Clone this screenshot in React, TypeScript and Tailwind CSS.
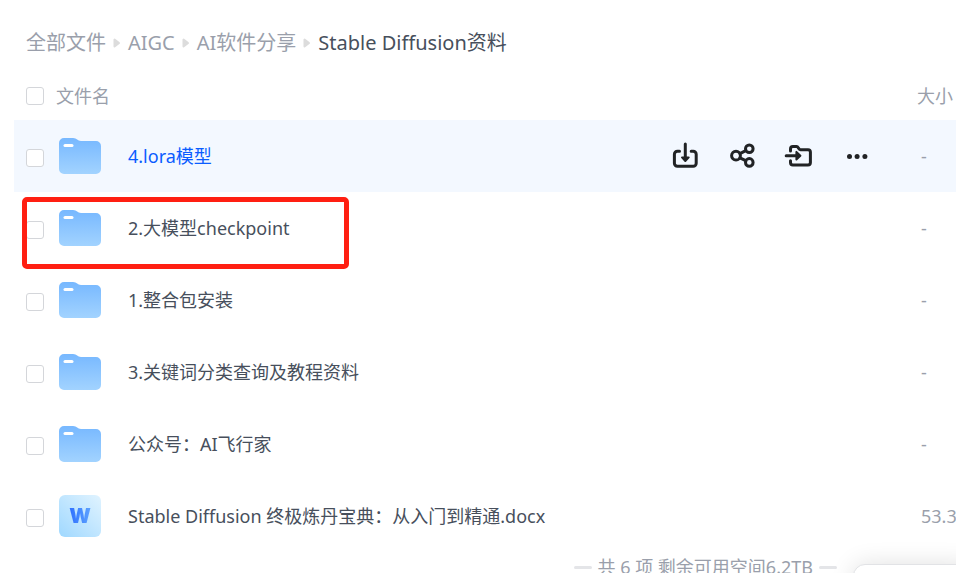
import React from "react";

const files = [
  { name: "4.lora模型", size: "-", type: "folder", active: true },
  { name: "2.大模型checkpoint", size: "-", type: "folder", marked: true },
  { name: "1.整合包安装", size: "-", type: "folder" },
  { name: "3.关键词分类查询及教程资料", size: "-", type: "folder" },
  { name: "公众号：AI飞行家", size: "-", type: "folder" },
  { name: "Stable Diffusion 终极炼丹宝典：从入门到精通.docx", size: "53.3M", type: "doc" },
];

const crumbs = ["全部文件", "AIGC", "AI软件分享"];

function Checkbox({ label }: { label: string }) {
  return (
    <input
      type="checkbox"
      aria-label={label}
      className="size-[18px] shrink-0 appearance-none rounded-[3px] border border-[#d4d6da] bg-white"
    />
  );
}

function FolderIcon() {
  return (
    <svg width="42" height="36" viewBox="0 0 42 36" className="shrink-0">
      <defs>
        <linearGradient id="folder" x1="0" y1="0" x2="0" y2="1">
          <stop offset="0" stopColor="#77b8ff" />
          <stop offset="1" stopColor="#a2d3ff" />
        </linearGradient>
      </defs>
      <path
        d="M5 0H14C18 0 18.5 3 22 3H37A5 5 0 0 1 42 8V31A5 5 0 0 1 37 36H5A5 5 0 0 1 0 31V5A5 5 0 0 1 5 0Z"
        fill="url(#folder)"
      />
      <rect x="4.5" y="6" width="10" height="3" rx="1.5" fill="#fff" />
    </svg>
  );
}

function DocIcon() {
  return (
    <span className="flex size-[42px] shrink-0 items-center justify-center rounded-md bg-linear-to-tr from-[#9fd8ff] to-[#e0f3ff]">
      <span className="bg-linear-to-r from-[#2f6fff] to-[#5ea2ff] bg-clip-text font-[Inter] text-xl leading-6 font-black text-transparent">
        W
      </span>
    </span>
  );
}

const iconProps = {
  width: 28,
  height: 28,
  viewBox: "0 0 28 28",
  fill: "none",
  stroke: "currentColor",
  strokeWidth: 3,
  strokeLinecap: "round" as const,
  strokeLinejoin: "round" as const,
};

function RowActions() {
  return (
    <div className="flex shrink-0 gap-[29px] text-[#212325]">
      <button type="button" aria-label="下载">
        <svg {...iconProps}>
          <path d="M8.5 9.3H6.4A3 3 0 0 0 3.4 12.3V21.3A3 3 0 0 0 6.4 24.3H22.2A3 3 0 0 0 25.2 21.3V12.3A3 3 0 0 0 22.2 9.3H20.2" />
          <path d="M14.3 2V16" />
          <path d="M11 15.4H17.7L14.3 19Z" fill="currentColor" strokeWidth="2" />
        </svg>
      </button>
      <button type="button" aria-label="分享">
        <svg {...iconProps}>
          <circle cx="8" cy="13.7" r="4.4" />
          <circle cx="21.3" cy="6.8" r="3.8" />
          <circle cx="21.3" cy="20.4" r="3.8" />
          <path d="M12 11.6L17.7 8.6M12 15.8L17.7 18.7" />
        </svg>
      </button>
      <button type="button" aria-label="移动">
        <svg {...iconProps} className="overflow-visible">
          <path d="M5.5 9V7A2.4 2.4 0 0 1 7.9 4.6H11.6C13.6 4.6 13.2 7.7 15.4 7.7H23A2.4 2.4 0 0 1 25.4 10.1V20.5A2.4 2.4 0 0 1 23 22.9H7.9A2.4 2.4 0 0 1 5.5 20.5V18.7" />
          <path d="M1.2 13.7H12" />
          <path d="M11.4 9.9V17.5L15.4 13.7Z" fill="currentColor" strokeWidth="2" />
        </svg>
      </button>
      <button type="button" aria-label="更多">
        <svg {...iconProps} fill="currentColor" stroke="none">
          <circle cx="7.5" cy="14.5" r="2.5" />
          <circle cx="15.1" cy="14.5" r="2.5" />
          <circle cx="22.9" cy="14.5" r="2.5" />
        </svg>
      </button>
    </div>
  );
}

export default function App() {
  return (
    <main className="relative h-screen overflow-hidden bg-white pl-3.5 font-['Noto_Sans','Noto_Sans_CJK_SC',sans-serif] text-lg text-[#474f5c]">
      <nav className="flex items-center gap-[7px] pt-7 pl-3 text-xl leading-[30px] whitespace-nowrap text-[#9a9fab]">
        {crumbs.map((crumb) => (
          <React.Fragment key={crumb}>
            <a href="#">{crumb}</a>
            <svg width="8" height="12" viewBox="0 0 8 12" className="shrink-0">
              <path
                d="M1.5 2.5V9.5L6 6Z"
                fill="#dcdcdc"
                stroke="#dcdcdc"
                strokeWidth="2"
                strokeLinejoin="round"
              />
            </svg>
          </React.Fragment>
        ))}
        <span className="text-[#474f5c]">Stable Diffusion资料</span>
      </nav>

      <table className="mt-3.5 w-full table-fixed">
        <thead>
          <tr className="h-12 text-left text-[#9a9fab]">
            <th className="p-0 pl-3 font-normal">
              <div className="flex items-center gap-3">
                <Checkbox label="全选" />
                文件名
              </div>
            </th>
            <th className="w-[39px] p-0 font-normal whitespace-nowrap">大小</th>
          </tr>
        </thead>
        <tbody>
          {files.map((file) => (
            <tr key={file.name} className={file.active ? "h-[72px] bg-[#f3f8ff]" : "h-[72px]"}>
              <td className="relative p-0 pr-[47px] pl-3">
                <div className="flex items-center">
                  <div className="mr-[15px] flex pt-1">
                    <Checkbox label={file.name} />
                  </div>
                  {file.type === "folder" ? <FolderIcon /> : <DocIcon />}
                  <a
                    href="#"
                    className={
                      file.active
                        ? "ml-[27px] flex-1 whitespace-nowrap text-[#0a5cff]"
                        : "ml-[27px] flex-1 whitespace-nowrap"
                    }
                  >
                    {file.name}
                  </a>
                  {file.active && <RowActions />}
                </div>
                {file.marked && (
                  <div className="pointer-events-none absolute top-[5px] left-2 h-[72px] w-[327px] rounded-[5px] border-5 border-[#ff1f12]" />
                )}
              </td>
              <td className="overflow-hidden p-0 pl-1 whitespace-nowrap text-[#9a9fab]">{file.size}</td>
            </tr>
          ))}
        </tbody>
      </table>

      <footer className="flex items-center justify-end gap-1.5 pr-[119px] leading-[30px] whitespace-nowrap text-[#9a9fab]">
        <span className="h-[3px] w-[18px] rounded-full bg-[#e4e5e8]" />
        共 6 项 剩余可用空间6.2TB
        <span className="h-[3px] w-[18px] rounded-full bg-[#e4e5e8]" />
      </footer>

      {/* corner of the transfer panel docked to the bottom right */}
      <aside className="absolute -right-5 -bottom-10 h-[49px] w-[123px] rounded-xl border border-[#e2e3e6] bg-white shadow-[0_0_24px_rgba(0,0,0,0.12)]" />
    </main>
  );
}
